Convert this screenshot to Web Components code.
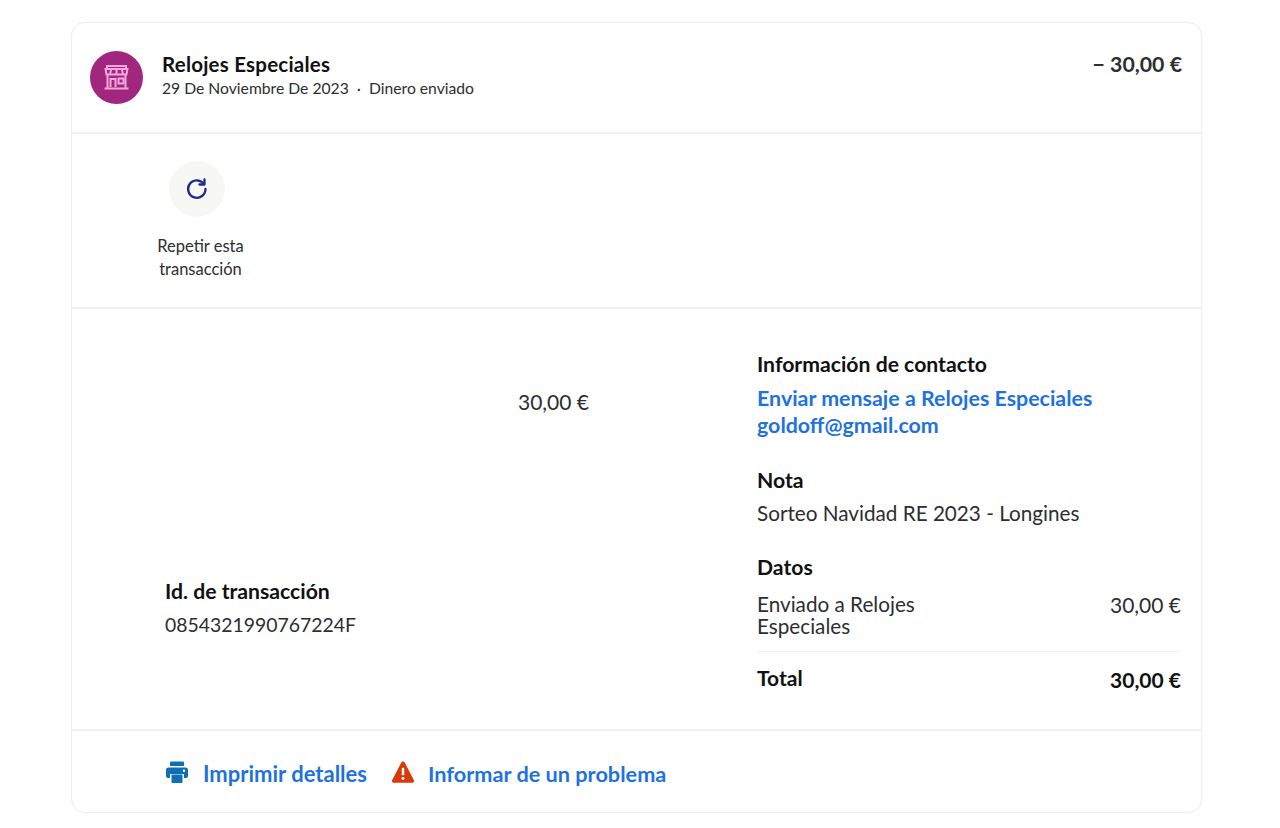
<!DOCTYPE html>
<html lang="es"><head><meta charset="utf-8"><title>Detalle</title>
<style>
html,body{margin:0;background:#fff}
body{font-family:Lato,"Liberation Sans",sans-serif;color:#111;height:828px;overflow:hidden}
</style></head><body>
<tx-card>
  <tx-header></tx-header>
  <tx-actions></tx-actions>
  <tx-details></tx-details>
  <tx-footer></tx-footer>
</tx-card>
<script>
function def(name,html){
  customElements.define(name,class extends HTMLElement{
    constructor(){super();this.attachShadow({mode:'open'}).innerHTML=html}
  });
}
def('tx-card',`<style>:host{display:block;box-sizing:border-box;width:1131px;height:791px;margin:22px 0 0 71px;border:1.5px solid #efefef;border-radius:14px;background:#fff;box-shadow:0 0 2px rgba(0,0,0,.05);overflow:hidden}
.c{display:flex;flex-direction:column;height:100%}</style><div class="c"><slot></slot></div>`);
def('tx-header',`<style>:host{display:flex;box-sizing:border-box;height:111px;padding:28px 19px 0 18px;border-bottom:2px solid #f0f0f0;gap:19px}
.t{flex:1;min-width:0}
.n{font-size:20.500px;font-weight:700;line-height:26px;color:#111;letter-spacing:.22px}
.s{font-size:15.700px;line-height:20px;margin-top:1px;color:#2c2e2f}
.a{font-size:21.300px;font-weight:700;line-height:26px;color:#2c2e2f}
.i{width:53px;height:53px;border-radius:50%;background:#a0267e;display:flex;align-items:center;justify-content:center;flex:none}
</style>
<div class="i"><svg width="31" height="31" viewBox="0 0 31 31" fill="none" stroke="#f7a8dc" stroke-width="2"><path d="M6 4h19v3H6zM4.500 7h22l-1 5.500h-20z"/><path d="M10 7.500l-1 5M15.500 7.500v5M21 7.500l1 5"/><path d="M6.500 12.500V26M24.500 12.500V26M3.500 26.500h24"/><path d="M9.500 25v-8h5v8M17.500 16.500h5v5h-5z"/></svg></div>
<div class="t"><div class="n">Relojes Especiales</div><div class="s">29 De Noviembre De 2023 &nbsp;·&nbsp; Dinero enviado</div></div>
<div class="a">− 30,00 €</div>`);
def('tx-actions',`<style>:host{display:block;box-sizing:border-box;height:175px;border-bottom:2px solid #f0f0f0;padding:27px 0 0 76px}
.b{width:105px;display:flex;flex-direction:column;align-items:center}
.o{width:56px;height:56px;border-radius:50%;background:#f7f7f3;display:flex;align-items:center;justify-content:center;margin-left:-8px}
.l{font-size:16.500px;line-height:23px;text-align:center;margin-top:18px;color:#2c2e2f}
</style><div class="b"><div class="o"><svg width="24" height="24" viewBox="0 0 24 24" fill="none" stroke="#1f2a8c" stroke-width="2.300" stroke-linecap="round"><path d="M18.500 6.500A8.700 8.700 0 1 0 20.500 12"/><path d="M19.500 2.500v5h-5" stroke-linejoin="round"/></svg></div><div class="l">Repetir esta<br>transacción</div></div>`);
def('tx-details',`<style>:host{display:grid;grid-template-columns:424px 424px;column-gap:168px;box-sizing:border-box;height:422px;border-bottom:2px solid #f0f0f0;padding:42px 0 0 93px;color:#1a1a1a}
h3{margin:0;font-size:21.200px;line-height:26px;font-weight:700;color:#111}
.v{font-size:20.700px;line-height:26px;color:#2c2e2f}
.l{display:flex;flex-direction:column}
.amt{text-align:right;margin-top:38px;font-size:21px}
.id{margin-top:163px}
.id .v{margin-top:8px;font-size:19.400px}
a{display:block;color:#1f72de;font-size:21.400px;line-height:27px;font-weight:700;text-decoration:none}
.links{margin-top:8px}
.note{margin-top:28px}.note .v{margin-top:7px}
.data{margin-top:28px}
.row{display:flex;justify-content:space-between}
.row .v{line-height:22px}
.send{margin-top:13px;padding-bottom:14px;border-bottom:1px solid #f3f3f3}
.send .v+.v{padding-top:1px;font-size:21px}
.tot{margin-top:13px}
.tot b{font-size:21px;font-weight:700;line-height:26px;color:#111}
.tot b+b{margin-top:2px}
</style>
<div class="l"><div class="v amt">30,00 €</div><div class="id"><h3>Id. de transacción</h3><div class="v">0854321990767224F</div></div></div>
<div><h3>Información de contacto</h3><div class="links"><a>Enviar mensaje a Relojes Especiales</a><a>goldoff@gmail.com</a></div>
<div class="note"><h3>Nota</h3><div class="v">Sorteo Navidad RE 2023 - Longines</div></div>
<div class="data"><h3>Datos</h3><div class="row send"><div class="v">Enviado a Relojes<br>Especiales</div><div class="v">30,00 €</div></div>
<div class="row tot"><b>Total</b><b>30,00 €</b></div></div></div>`);
def('tx-footer',`<style>:host{display:flex;align-items:center;box-sizing:border-box;flex:1;padding:4px 0 0 93px;color:#1f72de;font-size:22px;font-weight:700}
svg{flex:none;display:block}
.a{margin-left:14px}
.w{margin-left:24px}
.b{margin-left:13px;font-size:21.700px}
</style>
<svg width="24" height="24" viewBox="0 0 24 24" fill="#0f6fb5" style="margin-top:-3px"><path d="M6 1.500h12a1 1 0 0 1 1 1V6H5V2.500a1 1 0 0 1 1-1z"/><path d="M3.500 7.500h17a2.500 2.500 0 0 1 2.500 2.500v6a2 2 0 0 1-2 2h-2v-4H5v4H3a2 2 0 0 1-2-2v-6a2.500 2.500 0 0 1 2.500-2.500z"/><path d="M6.500 14.500h11V22a1 1 0 0 1-1 1h-9a1 1 0 0 1-1-1z"/><circle cx="19" cy="10.800" r="1.200" fill="#fff"/></svg>
<span class="a">Imprimir detalles</span>
<svg class="w" width="24" height="22" viewBox="0 0 24 23" style="margin-top:-4px"><path d="M12 .5c.8 0 1.400.4 1.800 1.100l9.500 18.300c.7 1.300-.2 2.800-1.700 2.800H2.400C.9 22.700 0 21.200.7 19.900l9.500-18.300c.4-.7 1-1.100 1.800-1.100z" fill="#d93a0b"/><rect x="10.700" y="7" width="2.600" height="8" rx="1" fill="#fff"/><circle cx="12" cy="18.300" r="1.500" fill="#fff"/></svg>
<span class="b">Informar de un problema</span>`);
</script></body></html>
